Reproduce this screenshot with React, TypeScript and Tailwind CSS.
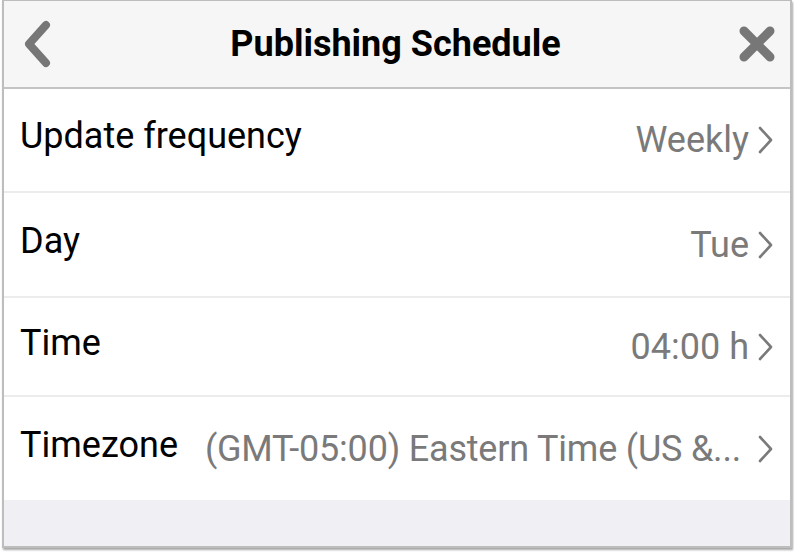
import React from "react";

function Chevron() {
  return (
    <svg width="18" height="30" viewBox="0 0 18 30" className="shrink-0">
      <path d="M3 3 L14 15 L3 27" fill="none" stroke="#7a7a7a" strokeWidth="2.6" strokeLinecap="round" strokeLinejoin="round" />
    </svg>
  );
}

function Row({ label, value, h, last, vpad }: { label: string; value: string; h: string; last?: boolean; vpad?: string }) {
  return (
    <div className={`flex ${h} shrink-0 items-center pl-[16px] pr-[15px] ${last ? "" : "border-b-2 border-[#ececec]"}`}>
      <div className="shrink-0 pb-[8px] text-[36px] text-black">{label}</div>
      <div className="ml-auto flex min-w-0 items-center gap-[8px] pl-[20px]">
        <div className={`whitespace-nowrap text-[36px] text-[#7a7a7a] ${vpad ?? ""}`}>{value}</div>
        <Chevron />
      </div>
    </div>
  );
}

export default function App() {
  return (
    <div className="h-[552px] w-[794px] bg-white pl-[2px]" style={{ fontFamily: "Roboto, 'Liberation Sans', sans-serif" }}>
      <div className="flex h-[548px] w-[790px] flex-col overflow-hidden border-x-2 border-b-2 border-t border-[#bdbdbd] shadow-[1px_2px_2px_rgba(0,0,0,0.35)]">
        <div className="flex h-[88px] shrink-0 items-center justify-between border-b-2 border-[#c4c4c4] bg-[#f6f6f6] pl-[15px] pr-[14px]">
          <svg width="34" height="48" viewBox="0 0 34 48">
            <path d="M27 5 L10 24 L27 43" fill="none" stroke="#777777" strokeWidth="8" strokeLinecap="round" strokeLinejoin="round" />
          </svg>
          <div className="text-[36px] font-bold text-black">Publishing Schedule</div>
          <svg width="38" height="36" viewBox="0 0 38 36">
            <path d="M6 5 L32 31 M32 5 L6 31" fill="none" stroke="#777777" strokeWidth="9" strokeLinecap="round" />
          </svg>
        </div>
        <Row h="h-[104px]" label="Update frequency" value="Weekly" />
        <Row h="h-[105px]" label="Day" value="Tue" />
        <Row h="h-[99px]" label="Time" value="04:00 h" />
        <Row h="h-[103px]" label="Timezone" value="(GMT-05:00) Eastern Time (US &..." vpad="pr-[8px] tracking-[-0.2px]" last />
        <div className="flex-1 bg-[#efeff4]" />
      </div>
    </div>
  );
}
